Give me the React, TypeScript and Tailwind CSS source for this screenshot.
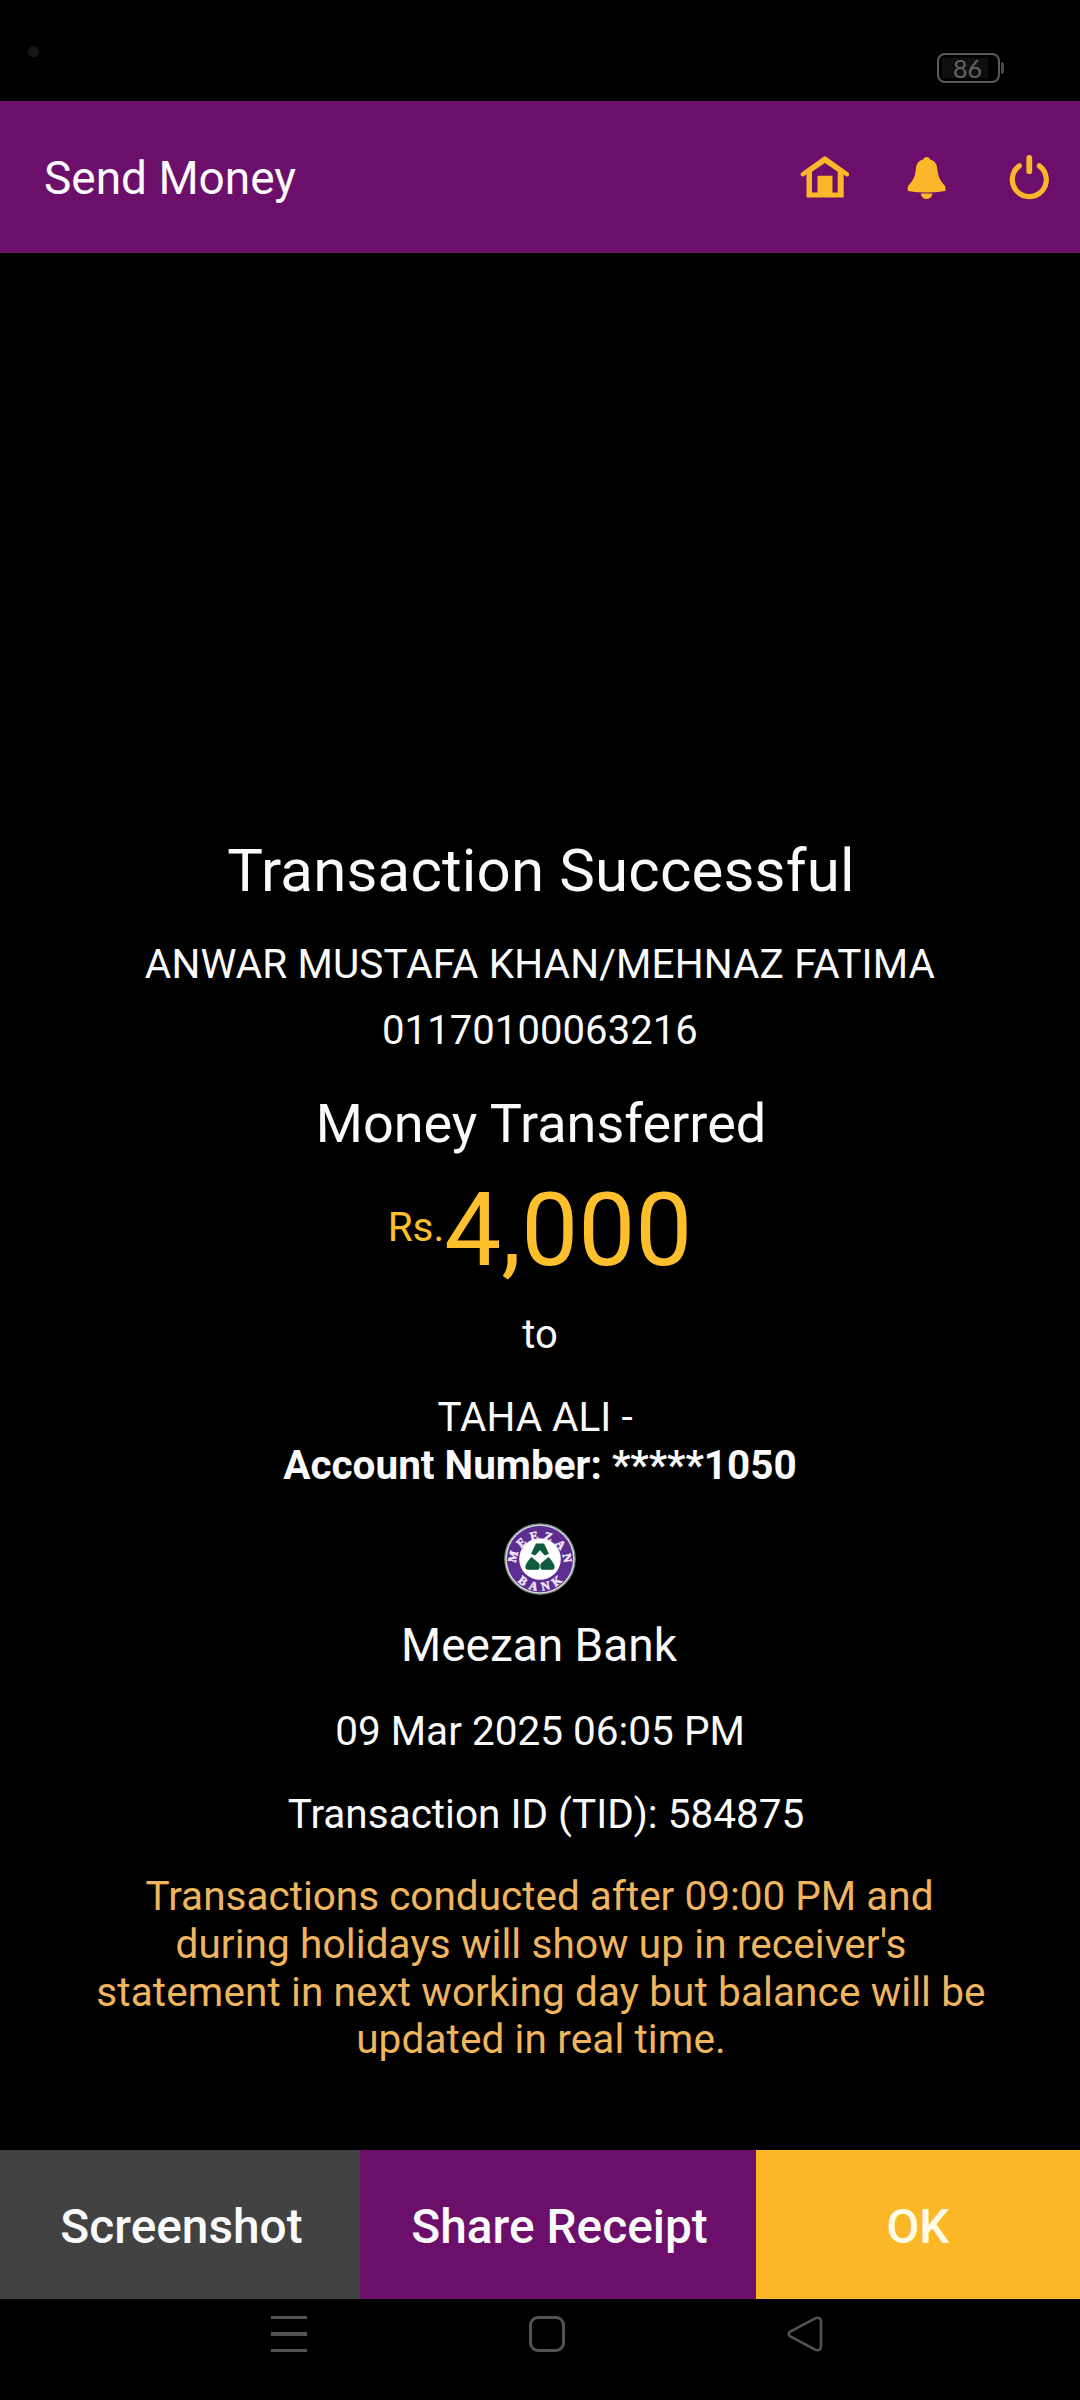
function StatusBar() {
  return (
    <div className="flex h-[101px] items-start justify-between pr-[76px] pl-7">
      <span className="mt-[46px] size-[11px] rounded-full bg-[#171717]" />
      <div className="mt-[53px] flex items-center gap-px">
        <div className="flex h-[30px] w-[63px] items-center rounded-[8px] border-2 border-[#5a5a5a] pl-[3px]">
          <div className="flex h-5 w-[46px] items-center justify-end bg-[#0f0f0f] pr-[6px] font-[Lato] text-[25px] leading-5 text-[#626262]">
            86
          </div>
        </div>
        <span className="h-3 w-[3px] rounded-r-sm bg-[#4a4a4a]" />
      </div>
    </div>
  );
}

function HomeIcon() {
  return (
    <svg className="h-11 w-[52px]" viewBox="799 155 52 44" fill="#fcb62a">
      <path
        d="M802.8 174.300 824.9 158.500 847 174.300"
        fill="none"
        stroke="#fcb62a"
        strokeWidth="4.4"
        strokeLinecap="round"
        strokeLinejoin="round"
      />
      <path
        fillRule="evenodd"
        d="M806.5 172 824.9 158.5 843.7 172V197.5H806.5ZM812 171.8V192.5H817.5V175.8H832.5V192.5H837.7V171.8L824.9 163Z"
      />
    </svg>
  );
}

function BellIcon() {
  return (
    <svg className="h-11 w-10" viewBox="907 156 40 44" fill="#fcb62a">
      <path d="M926.6 157c2 0 3 1 3.4 2.6 4.6 1 6.8 4.3 7.3 9.2.7 7.2 2.2 11 7.3 16.6 1 1.2 1.2 3 .8 5.6-12.500 2-25.100 2-37.600 0-.4-2.600-.2-4.400.8-5.600 5.100-5.600 6.600-9.400 7.300-16.600.5-4.900 2.700-8.200 7.300-9.200.4-1.600 1.400-2.600 3.400-2.600Z" />
      <path d="M920.8 193.5h11.600c-.3 3.300-2.600 5.500-5.800 5.500s-5.500-2.200-5.800-5.500Z" />
    </svg>
  );
}

function PowerIcon() {
  return (
    <svg
      className="h-[46px] w-[42px]"
      viewBox="1009 154.5 42 46"
      fill="none"
      stroke="#fcb62a"
      strokeLinecap="round"
    >
      <path strokeWidth="5.2" d="M1019.3 166.3a17 17 0 1 0 20 0" />
      <path strokeWidth="5.8" d="M1029.3 158.3V171.7" />
    </svg>
  );
}

function BankLogo() {
  return (
    <svg className="mt-[34px] size-[72px]" viewBox="0 0 72 72">
      <defs>
        <path id="ringTop" d="M12.300 38a23.800 23.800 0 0 1 47.400 0" />
        <path id="ringBottom" d="M4.400 36a31.600 31.600 0 0 0 63.200 0" />
      </defs>
      <circle cx="36" cy="36" r="35.200" fill="#d9dcd6" stroke="#6d8580" strokeWidth="1.200" />
      <circle cx="36" cy="36" r="33.200" fill="#5e2d91" />
      <circle cx="36" cy="36" r="20.800" fill="#fff" />
      <g
        fill="#f3e8f8"
        stroke="#f3e8f8"
        strokeWidth="0.5"
        fontFamily="Liberation Serif, serif"
        fontWeight="700"
        fontSize="12"
        textAnchor="middle"
      >
        <text textLength="74">
          <textPath href="#ringTop" startOffset="50%" textLength="74">
            MEEZAN
          </textPath>
        </text>
        <text textLength="50">
          <textPath href="#ringBottom" startOffset="50%" textLength="50">
            BANK
          </textPath>
        </text>
      </g>
      <g fill="#0d5a3c">
        <path d="M32 20.500h8l5 10.300-4.200 1.700L36 27.300l-4.800 5.200-4.200-1.700Z" />
        <path d="M27.500 34l7.500 6.200c.8 1.700.9 3.600.3 5.200-.3.900-.9 1.300-1.800 1.300H24c-2.200 0-3-1.600-2.500-3.800.9-3.600 3.500-6 6-8.900Z" />
        <path d="M44.500 34l-7.500 6.200c-.8 1.700-.9 3.600-.3 5.200.3.900.9 1.300 1.800 1.300H48c2.200 0 3-1.600 2.500-3.800-.9-3.600-3.500-6-6-8.900Z" />
      </g>
    </svg>
  );
}

export default function App() {
  return (
    <div className="flex h-[2400px] w-[1080px] flex-col overflow-hidden bg-black font-[Roboto,sans-serif] text-[#fafafa]">
      <StatusBar />

      <header className="flex h-[152px] items-center justify-between bg-[#6b0f6b] pr-[29px] pl-11">
        <h1 className="mt-[2px] text-[46px] leading-[54px]">Send Money</h1>
        <div className="flex items-center">
          <HomeIcon />
          <span className="ml-14 flex pt-px">
            <BellIcon />
          </span>
          <span className="ml-[62px] flex">
            <PowerIcon />
          </span>
        </div>
      </header>

      <main className="flex h-[1897px] flex-col items-center pt-[583px] text-[40.5px] leading-[48px] whitespace-nowrap">
        <h2 className="pl-0.5 text-[60px] leading-[70px] tracking-[0.17px]">Transaction Successful</h2>
        <p className="mt-[34px] tracking-[0.13px]">ANWAR MUSTAFA KHAN/MEHNAZ FATIMA</p>
        <p className="mt-[19px] text-[40px] tracking-[0.08px]">01170100063216</p>
        <h3 className="mt-[37px] pl-0.5 text-[54px] leading-[64px]">Money Transferred</h3>
        <div className="mt-[15px] flex h-[120px] items-start text-[#fdc02c]">
          <span className="mt-8">Rs.</span>
          <span className="text-[101.5px] leading-[120px]">4,000</span>
        </div>
        <p className="mt-5 text-[40px]">to</p>
        <p className="mt-[34px] pr-[10px]">TAHA ALI -</p>
        <p className="font-bold">Account Number: *****1050</p>
        <BankLogo />
        <p className="mt-[23px] pr-0.5 text-[46px] leading-[54px]">Meezan Bank</p>
        <p className="mt-[35px] text-[40.5px]">09 Mar 2025 06:05 PM</p>
        <p className="mt-[35px] pl-3">Transaction ID (TID): 584875</p>
        <p className="mt-[35px] pl-0.5 text-center leading-[47.75px] tracking-[0.11px] text-[#f0b55f]">
          <span className="mr-[3px] tracking-normal">Transactions conducted after 09:00 PM and</span>
          <br />
          during holidays will show up in receiver's
          <br />
          statement in next working day but balance will be
          <br />
          updated in real time.
        </p>
      </main>

      <div className="flex h-[149px] text-[47.8px] leading-[56px] font-medium">
        <button className="w-[360px] bg-[#424242] pt-[5px] pl-[3px]">Screenshot</button>
        <button className="w-[396px] bg-[#6b0f6b] pt-[5px] pl-[3px]">Share Receipt</button>
        <button className="w-[324px] bg-[#fcb729] pt-[5px] text-[#fffbe6]">OK</button>
      </div>

      <nav className="flex h-[101px] items-start pt-[17px] pl-[271px]">
        <div className="flex w-9 flex-col gap-[13px]">
          <span className="h-[3px] bg-[#535353]" />
          <span className="h-[4px] bg-[#535353]" />
          <span className="h-[3px] bg-[#535353]" />
        </div>
        <span className="ml-[222px] size-9 rounded-[9px] border-3 border-[#535353]" />
        <svg className="ml-[222px] h-9 w-9" viewBox="0 0 36 36" fill="none" stroke="#535353" strokeWidth="2.6">
          <path d="M3.2 15.6 28.2 2.4c3-1.500 5.800-.2 5.800 3.100v25c0 3.300-2.800 4.600-5.800 3.100L3.200 20.400c-2-1.200-2-3.600 0-4.800Z" />
        </svg>
      </nav>
    </div>
  );
}
